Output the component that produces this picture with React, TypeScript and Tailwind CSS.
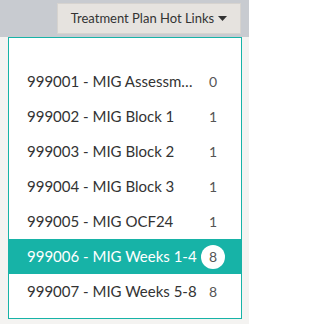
const plans = [
  { name: '999001 - MIG Assessment', count: 0 },
  { name: '999002 - MIG Block 1', count: 1 },
  { name: '999003 - MIG Block 2', count: 1 },
  { name: '999004 - MIG Block 3', count: 1 },
  { name: '999005 - MIG OCF24', count: 1 },
  { name: '999006 - MIG Weeks 1-4', count: 8, active: true },
  { name: '999007 - MIG Weeks 5-8', count: 8 },
];

export default function App() {
  return (
    <div className="w-[249px] h-[324px] bg-[#f4f3f1] font-['Lato','Noto_Sans',sans-serif] overflow-hidden">
      <div className="h-[37px] bg-[#c8cbd0] flex justify-end pt-[3px] pr-[8px]">
        <button className="h-[31px] w-[184px] bg-[#e6e3df] border border-[#d6d3cf] text-[#333] text-[13px] flex items-center justify-center gap-[4px]">
          Treatment Plan Hot Links
          <svg width="9" height="5" viewBox="0 0 9 5">
            <path d="M0 0h9L4.5 5z" fill="#333" />
          </svg>
        </button>
      </div>
      <div className="ml-[8px] w-[234px] h-[282px] bg-white border border-[#17b3a7] pt-[26px]">
        {plans.map((p) => (
          <div
            key={p.name}
            className={
              'h-[35px] flex items-center pl-[18px] pr-[16px] text-[15px] ' +
              (p.active ? 'bg-[#17b3a7] text-white' : 'text-[#333]')
            }
          >
            <span className="flex-1 min-w-0 truncate pr-[3px]">{p.name}</span>
            <span
              className={
                'w-[24px] h-[24px] shrink-0 flex items-center justify-center text-[14px] ' +
                (p.active ? 'bg-white rounded-full text-[#555]' : 'text-[#555]')
              }
            >
              {p.count}
            </span>
          </div>
        ))}
      </div>
    </div>
  );
}
